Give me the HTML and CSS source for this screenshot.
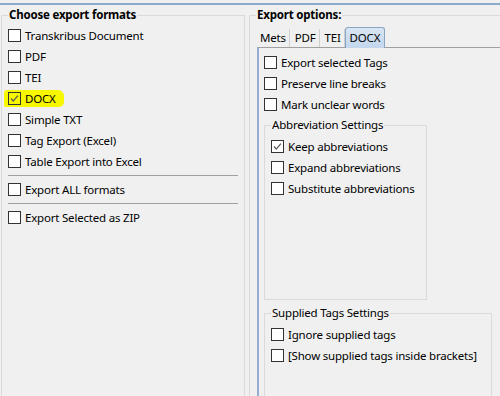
FILE: index.html
```html
<!DOCTYPE html>
<html lang="en">
<head>
  <meta charset="UTF-8" />
  <title>Export Document</title>
  <link rel="stylesheet" href="styles.css">
</head>
<body>

  <div class="top-line"></div>

  <div class="window">
    <div class="accent"></div>

    <fieldset class="group formats">
      <legend>Choose export formats</legend>
      <div class="list">
        <label class="check"><span class="box"></span>Transkribus Document</label>
        <label class="check"><span class="box"></span>PDF</label>
        <label class="check"><span class="box"></span>TEI</label>
        <label class="check"><span class="marked"><span class="box checked clear"><svg viewBox="0 0 13 13"><polyline points="2.5,6.5 5,9.5 10.5,3"/></svg></span>DOCX</span></label>
        <label class="check"><span class="box"></span>Simple TXT</label>
        <label class="check"><span class="box"></span>Tag Export (Excel)</label>
        <label class="check"><span class="box"></span>Table Export into Excel</label>
        <div class="separator"></div>
        <label class="check"><span class="box"></span>Export ALL formats</label>
        <div class="separator"></div>
        <label class="check"><span class="box"></span>Export Selected as ZIP</label>
      </div>
    </fieldset>

    <fieldset class="group options">
      <legend>Export options:</legend>

      <div class="tabs">
        <div class="tab">Mets</div>
        <div class="tab">PDF</div>
        <div class="tab">TEI</div>
        <div class="tab active">DOCX</div>
      </div>

      <div class="panel">
        <label class="check"><span class="box"></span>Export selected Tags</label>
        <label class="check"><span class="box"></span>Preserve line breaks</label>
        <label class="check"><span class="box"></span>Mark unclear words</label>

        <fieldset class="subgroup abbr">
          <legend>Abbreviation Settings</legend>
          <div class="sub-body">
            <label class="check"><span class="box checked"><svg viewBox="0 0 13 13"><polyline points="2.5,6.5 5,9.5 10.5,3"/></svg></span>Keep abbreviations</label>
            <label class="check"><span class="box"></span>Expand abbreviations</label>
            <label class="check"><span class="box"></span>Substitute abbreviations</label>
          </div>
        </fieldset>

        <fieldset class="subgroup supplied">
          <legend>Supplied Tags Settings</legend>
          <div class="sub-body">
            <label class="check"><span class="box"></span>Ignore supplied tags</label>
            <label class="check"><span class="box"></span>[Show supplied tags inside brackets]</label>
          </div>
        </fieldset>
      </div>
    </fieldset>
  </div>

</body>
</html>
```

FILE: styles.css
```css
body {
  margin: 0;
  width: 500px;
  height: 396px;
  overflow: hidden;
  background: #f0f0f0;
  color: #000;
  font-family: "Segoe UI", "Noto Sans", sans-serif;
  font-size: 11.5px;
  letter-spacing: -0.2px;
}

.top-line {
  height: 2px;
  margin-top: 3px;
  background: #8eaacb;
}

.window {
  display: flex;
  height: 400px;
}

.accent {
  width: 2px;
  margin-left: 1px;
  background: #4cc38a;
}

/* group boxes */
.group, .subgroup {
  margin: 2px 0 0;
  padding: 0;
  border: 1px solid #dadada;
  min-width: 0;
}

.group > legend, .subgroup > legend {
  margin-left: 6px;
  padding: 0 1px;
  line-height: 16px;
}

.group > legend {
  font-weight: bold;
}

.formats {
  flex: 0 0 244px;
  box-sizing: border-box;
}

.options {
  flex: 0 0 260px;
  margin-left: 4px;
  box-sizing: border-box;
}

.list {
  padding: 2px 6px 0;
}

/* checkbox rows */
.check {
  display: flex;
  align-items: center;
  height: 21px;
  white-space: nowrap;
}

.box {
  width: 13px;
  height: 13px;
  box-sizing: border-box;
  border: 1px solid #333;
  background: #fff;
  margin-right: 4px;
  flex: none;
}

.box svg {
  display: block;
  width: 11px;
  height: 11px;
}

.box svg polyline {
  fill: none;
  stroke: #555;
  stroke-width: 1.4;
}

.box.clear {
  background: transparent;
}

.marked {
  display: flex;
  align-items: center;
  height: 17px;
  margin-left: -4px;
  padding: 0 8px 0 4px;
  background: #f7f700;
  border-radius: 3px 6px 5px 2px;
}

.separator {
  height: 1px;
  margin: 3px 0;
  background: #a0a0a0;
}

/* tabs */
.tabs {
  display: flex;
  align-items: flex-end;
  height: 20px;
  margin: 4px 0 0 5px;
  position: relative;
  z-index: 1;
}

.tab {
  height: 18px;
  line-height: 18px;
  padding: 0 3px 0 5px;
  border-right: 1px solid #cfcfcf;
}

.tab.active {
  height: 20px;
  line-height: 20px;
  padding: 0 4px;
  margin-bottom: -1px;
  border: 1px solid #8ba4c4;
  border-bottom: none;
  border-radius: 3px 3px 0 0;
  background: linear-gradient(#d9e6f4, #c3d6ec);
}

.panel {
  margin-left: 7px;
  padding: 4px 0 0 5px;
  border-top: 1px solid #a0a0a0;
  border-left: 2px solid #94add0;
  height: 360px;
}

.subgroup {
  margin-top: 2px;
}

.abbr {
  width: 163px;
  box-sizing: border-box;
}

.supplied {
  width: 228px;
  box-sizing: border-box;
  margin-top: 5px;
}

.sub-body {
  padding: 3px 6px 0;
  box-sizing: border-box;
}

.abbr .sub-body {
  height: 166px;
}

.supplied .sub-body {
  height: 90px;
}
```
